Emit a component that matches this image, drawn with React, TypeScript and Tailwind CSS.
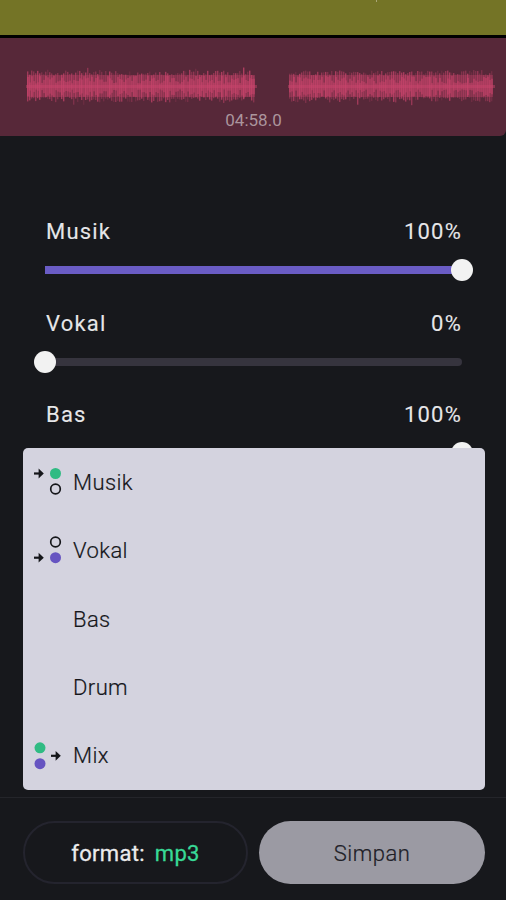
import { useState } from 'react';

type Track = { name: string; value: number };

const tracks: Track[] = [
  { name: 'Musik', value: 100 },
  { name: 'Vokal', value: 0 },
  { name: 'Bas', value: 100 },
];

const saveOptions = ['Musik', 'Vokal', 'Bas', 'Drum', 'Mix'];

// small repeatable noise so the waveform is the same on every render
function noise(i: number) {
  const n = Math.sin(i * 12.9898) * 43758.5453;
  return n - Math.floor(n);
}

function Wave({ from, to, seed }: { from: number; to: number; seed: number }) {
  const bars = Array.from({ length: Math.floor((to - from) / 2) }, (_, i) => ({
    x: from + i * 2,
    up: 11 + noise(i + seed) * 5 + (noise(i * 3 + seed) > 0.93 ? 3 : 0),
    down: 10 + noise(i * 7 + seed) * 6 + (noise(i * 11 + seed) > 0.9 ? 3 : 0),
    opacity: 0.15 + noise(i * 5 + seed) * 0.6,
    core: 3 + noise(i * 13 + seed) * 8,
  }));

  return (
    <g fill="#c9446c">
      <rect x={from} y={37} width={to - from} height={22} opacity={0.34} />
      {bars.map((b) => (
        <g key={b.x}>
          <rect x={b.x} y={48.5 - b.up} width={1.4} height={b.up + b.down} opacity={b.opacity} />
          <rect x={b.x} y={48.5 - b.core} width={2} height={b.core * 2} opacity={0.5} />
        </g>
      ))}
      <rect x={from - 1} y={47} width={to - from + 3} height={3} opacity={0.45} />
    </g>
  );
}

function Timeline() {
  return (
    <header className="h-[136px] shrink-0">
      <div className="flex h-[38px] justify-center border-b-[3px] border-black bg-[#747426]">
        <span className="ml-[246px] h-[2px] w-px bg-[#aaa676]" />
      </div>
      <div className="relative h-[98px] rounded-br-md bg-[#572839]">
        <svg width="506" height="98" viewBox="0 0 506 98" className="block">
          <Wave from={27} to={255} seed={11} />
          <Wave from={289} to={493} seed={420} />
        </svg>
        <span className="absolute inset-x-0 top-[72px] pl-px text-center text-[17px] leading-5 text-[#ab959d]">
          04:58.0
        </span>
      </div>
    </header>
  );
}

function Slider({ track, onChange }: { track: Track; onChange: (value: number) => void }) {
  return (
    <div className="h-[91.5px]">
      <div className="flex justify-between pl-px text-[22px] leading-6 tracking-[1.2px] text-[#e6e6e8] [-webkit-text-stroke:0.1px]">
        <span>{track.name}</span>
        <span>{track.value}%</span>
      </div>
      <div className="relative mt-[15px] flex h-[22px] items-center">
        <div className="h-2 w-full overflow-hidden rounded-r-full bg-[#36343e]">
          <div className="h-full bg-[#6a5cc5]" style={{ width: `${track.value}%` }} />
        </div>
        <span
          className="absolute size-[22px] -translate-x-1/2 rounded-full bg-[#f2f2f2]"
          style={{ left: `${track.value}%` }}
        />
        <input
          type="range"
          aria-label={track.name}
          value={track.value}
          onChange={(e) => onChange(Number(e.target.value))}
          className="absolute inset-0 w-full cursor-pointer opacity-0"
        />
      </div>
    </div>
  );
}

function Arrow({ x, y }: { x: number; y: number }) {
  return (
    <g transform={`translate(${x} ${y})`}>
      <path d="M0 0H7" stroke="#15161a" strokeWidth="2.2" />
      <path d="M4.6 -4.9L9.8 0L4.6 4.9Z" fill="#15161a" />
    </g>
  );
}

function OptionIcon({ name }: { name: string }) {
  if (name === 'Musik') {
    return (
      <svg width="30" height="30" viewBox="0 0 30 30">
        <Arrow x={1} y={6.5} />
        <circle cx="22.5" cy="6.5" r="5.5" fill="#30bb83" />
        <circle cx="22.5" cy="22" r="4.8" fill="none" stroke="#15161a" strokeWidth="1.7" />
      </svg>
    );
  }
  if (name === 'Vokal') {
    return (
      <svg width="30" height="30" viewBox="0 0 30 30">
        <circle cx="22.5" cy="6" r="4.8" fill="none" stroke="#15161a" strokeWidth="1.7" />
        <Arrow x={1} y={21.7} />
        <circle cx="22.5" cy="21.7" r="5.5" fill="#6654c1" />
      </svg>
    );
  }
  if (name === 'Mix') {
    return (
      <svg width="30" height="30" viewBox="0 0 30 30">
        <circle cx="7" cy="6.8" r="5.5" fill="#30bb83" />
        <circle cx="7" cy="22.7" r="5.5" fill="#6654c1" />
        <Arrow x={18} y={14.8} />
      </svg>
    );
  }
  return null;
}

export default function App() {
  const [values, setValues] = useState(tracks);
  const [menuOpen, setMenuOpen] = useState(true);

  const update = (index: number, value: number) =>
    setValues((prev) => prev.map((t, i) => (i === index ? { ...t, value } : t)));

  return (
    <div className="relative flex h-[900px] w-full flex-col overflow-hidden bg-[#17181c] font-['Roboto',sans-serif]">
      <Timeline />

      <main className="min-h-0 flex-1 overflow-hidden pt-[84px] pr-[44px] pl-[45px]">
        {values.map((track, i) => (
          <Slider key={track.name} track={track} onChange={(value) => update(i, value)} />
        ))}
      </main>

      <footer className="flex h-[103px] shrink-0 gap-[11px] border-t border-[#24252a] pt-[23px] pr-[21px] pl-[23px]">
        <button className="flex h-[63px] w-[225px] items-center justify-center gap-2.5 rounded-full border-2 border-[#24242e] pt-px text-[22px] tracking-[0.3px] text-[#ebebec] [-webkit-text-stroke:0.3px]">
          <span>format:</span>
          <span className="text-[#38d996]">mp3</span>
        </button>
        <button
          onClick={() => setMenuOpen((o) => !o)}
          className="h-[63px] flex-1 rounded-full bg-[#9b9aa3] pt-px text-[22px] font-light tracking-[0.5px] text-[#202027] [-webkit-text-stroke:0.2px]"
        >
          Simpan
        </button>
      </footer>

      {/* save menu, opens above the footer */}
      {menuOpen && (
        <ul className="absolute bottom-[110px] left-[23px] w-[462px] rounded-[5px] bg-[#d4d3df]">
          {saveOptions.map((name) => (
            <li
              key={name}
              className="flex h-[68.4px] items-center pl-[10px] text-[22px] font-light tracking-[0.4px] text-[#15161a] [-webkit-text-stroke:0.2px]"
            >
              <span className="w-10">
                <OptionIcon name={name} />
              </span>
              {name}
            </li>
          ))}
        </ul>
      )}
    </div>
  );
}
